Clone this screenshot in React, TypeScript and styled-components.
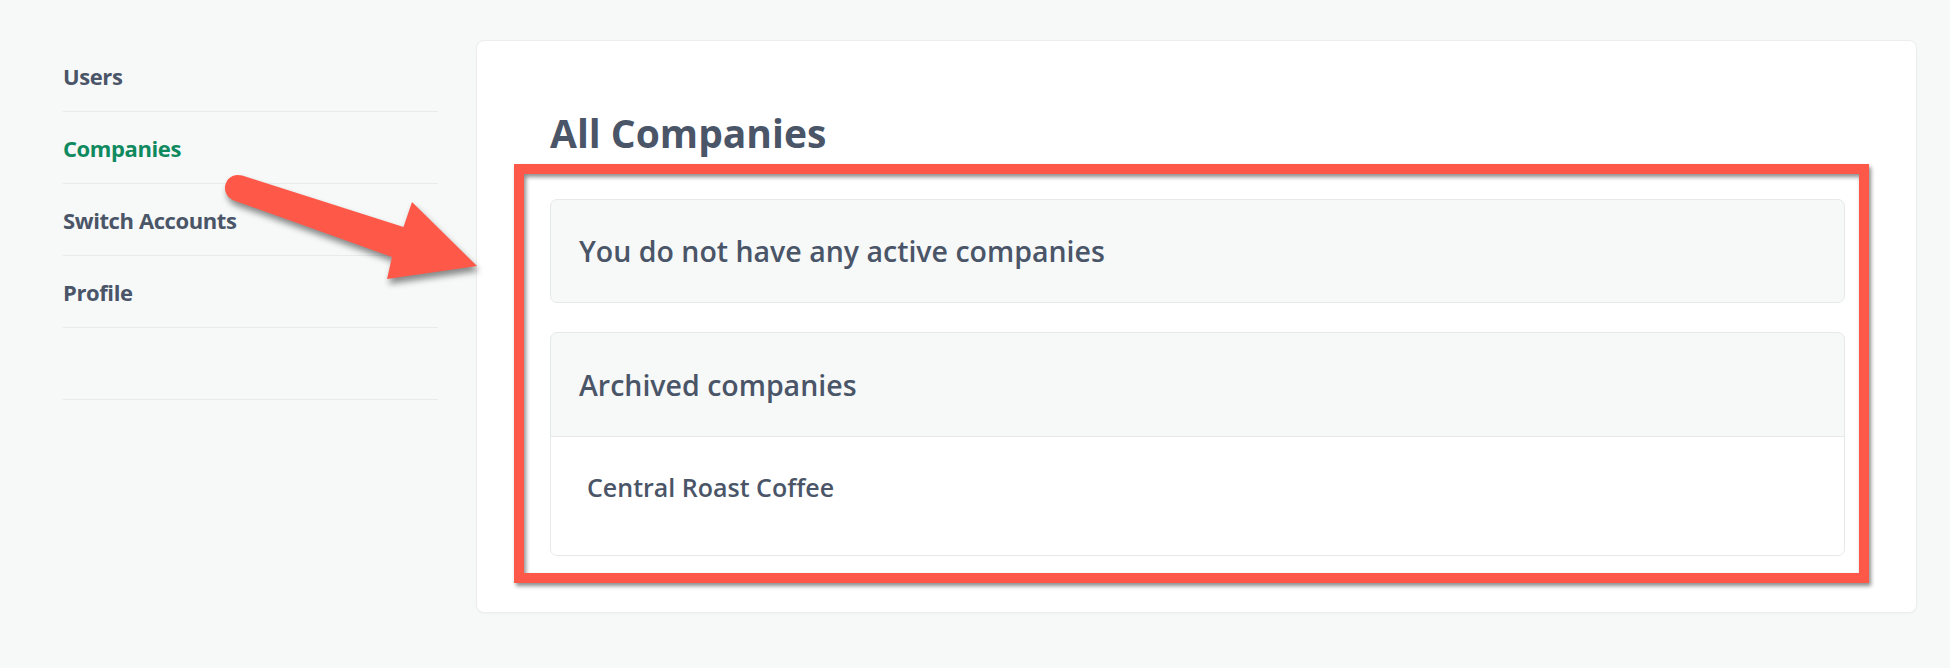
import React from "react";
import styled, { createGlobalStyle } from "styled-components";

const GlobalStyle = createGlobalStyle`
  html, body {
    margin: 0;
    padding: 0;
    background: #f7f8f8;
    font-family: "Open Sans", "Liberation Sans", sans-serif;
    -webkit-font-smoothing: antialiased;
  }
  * { box-sizing: border-box; }
`;

const Page = styled.div`
  position: relative;
  display: flex;
  align-items: flex-start;
  gap: 38px;
  min-height: 668px;
  padding: 40px 33px 0 63px;
  color: #4a5568;
`;

const Sidebar = styled.nav`
  width: 375px;
  flex: 0 0 375px;
  display: flex;
  flex-direction: column;
`;

const NavItem = styled.div<{ $active?: boolean }>`
  height: 72px;
  display: flex;
  align-items: center;
  border-bottom: 1px solid #e8ebeb;
  font-size: 22px;
  font-weight: 700;
  letter-spacing: -0.4px;
  color: ${(p) => (p.$active ? "#0f8a5f" : "#4a5568")};
`;

const Card = styled.main`
  flex: 1;
  background: #ffffff;
  border: 1px solid #eceeee;
  border-radius: 8px;
  box-shadow: 0 1px 2px rgba(0, 0, 0, 0.03);
  padding: 68px 73px 29px 73px;
`;

const Heading = styled.h1`
  margin: 0;
  font-size: 39px;
  line-height: 48px;
  font-weight: 700;
  color: #4a5568;
`;

const Highlight = styled.section`
  margin: 7px -26px 0 -36px;
  border: 10px solid #fe5849;
  padding: 25px 14px 17px 26px;
  box-shadow: 2px 3px 4px rgba(0, 0, 0, 0.45), inset 2px 3px 4px rgba(0, 0, 0, 0.45);
  display: flex;
  flex-direction: column;
  gap: 29px;
`;

const Panel = styled.div`
  background: #f7f8f8;
  border: 1px solid #e6e9ea;
  border-radius: 7px;
  overflow: hidden;
`;

const PanelHeader = styled.div<{ $divided?: boolean }>`
  height: ${(p) => (p.$divided ? "104px" : "102px")};
  display: flex;
  align-items: center;
  padding-left: 28px;
  font-size: 28.5px;
  font-weight: 600;
  color: #4a5568;
  border-bottom: ${(p) => (p.$divided ? "1px solid #e6e9ea" : "none")};
`;

const PanelBody = styled.ul`
  list-style: none;
  margin: 0;
  background: #ffffff;
  padding: 35px 0 53px 36px;
`;

const CompanyItem = styled.li`
  font-size: 25px;
  line-height: 30px;
  font-weight: 600;
  color: #4a5568;
`;

const ArrowSvg = styled.svg`
  position: absolute;
  left: 0;
  top: 0;
  width: 520px;
  height: 320px;
  pointer-events: none;
  overflow: visible;
  filter: drop-shadow(2px 5px 3px rgba(0, 0, 0, 0.45));
`;

export default function App() {
  return (
    <>
      <GlobalStyle />
      <Page>
        <Sidebar>
          <NavItem>Users</NavItem>
          <NavItem $active>Companies</NavItem>
          <NavItem>Switch Accounts</NavItem>
          <NavItem>Profile</NavItem>
          <NavItem />
        </Sidebar>
        <Card>
          <Heading>All Companies</Heading>
          <Highlight>
            <Panel>
              <PanelHeader>You do not have any active companies</PanelHeader>
            </Panel>
            <Panel>
              <PanelHeader $divided>Archived companies</PanelHeader>
              <PanelBody>
                <CompanyItem>Central Roast Coffee</CompanyItem>
              </PanelBody>
            </Panel>
          </Highlight>
        </Card>
        <ArrowSvg viewBox="0 0 520 320">
          <path
            d="M 242.1 175.6 L 403.5 227 L 412 202 L 477 266 L 387 279 L 392 257 L 233.9 200.4 A 13 13 0 0 1 242.1 175.6 Z"
            fill="#fe5849"
          />
        </ArrowSvg>
      </Page>
    </>
  );
}
